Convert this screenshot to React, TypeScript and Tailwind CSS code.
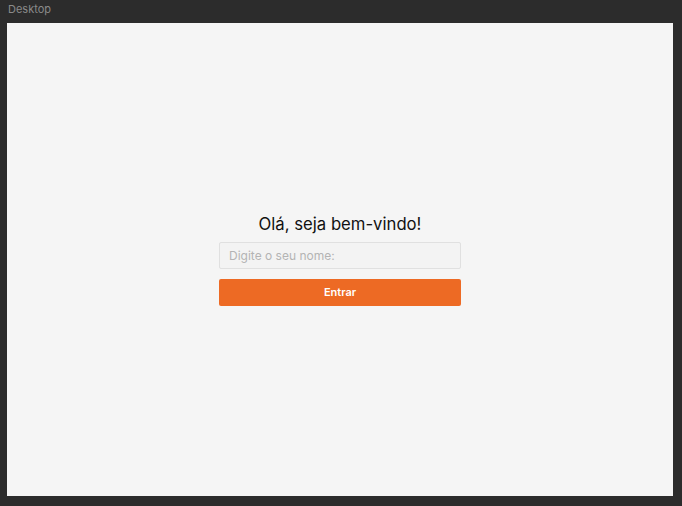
import React, { useState } from 'react';

export default function App() {
  const [name, setName] = useState('');

  return (
    <div className="w-[682px] h-[506px] bg-[#2c2c2c] flex flex-col font-['Inter',sans-serif]">
      <div className="h-[23px] px-[8px] pt-[2px] text-[11px] leading-[14px] text-[#8a8a8a]">Desktop</div>
      <div className="ml-[7px] w-[666px] h-[473px] bg-[#f5f5f5] flex flex-col items-center justify-center">
        <h1 className="text-[16.7px] leading-[20px] text-[#111] mb-[8px]">Olá, seja bem-vindo!</h1>
        <input
          value={name}
          onChange={(e) => setName(e.target.value)}
          placeholder="Digite o seu nome:"
          className="w-[242px] h-[27px] px-[9px] text-[12px] bg-[#f3f3f3] border border-[#e0e0e0] rounded-[2px] placeholder-[#b4b4b4] outline-none"
        />
        <button className="mt-[10px] w-[242px] h-[27px] bg-[#ed6a24] text-white text-[11px] font-semibold rounded-[2px]">
          Entrar
        </button>
      </div>
    </div>
  );
}
